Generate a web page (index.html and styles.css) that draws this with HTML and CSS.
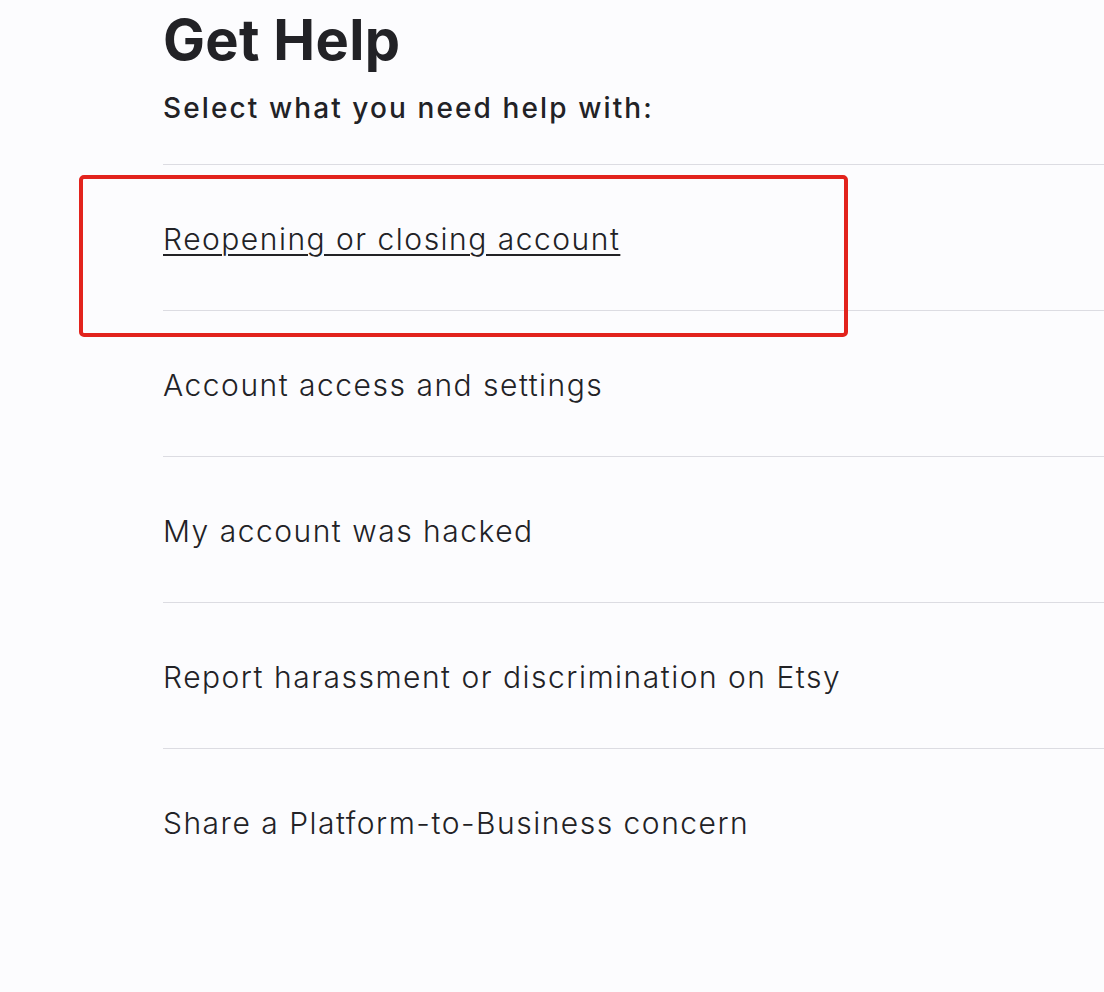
FILE: index.html
```html
<!DOCTYPE html>
<html lang="en">
<head>
    <meta charset="UTF-8">
    <title>Get Help</title>
    <link rel="stylesheet" href="styles.css">
</head>
<body>
    <div class="help">
        <h1>Get Help</h1>
        <p class="subtitle">Select what you need help with:</p>
        <ul class="topics">
            <li class="topic"><a href="#" class="active">Reopening or closing account</a></li>
            <li class="topic"><a href="#">Account access and settings</a></li>
            <li class="topic"><a href="#">My account was hacked</a></li>
            <li class="topic"><a href="#">Report harassment or discrimination on Etsy</a></li>
            <li class="topic"><a href="#">Share a Platform-to-Business concern</a></li>
        </ul>
        <div class="highlight"></div>
    </div>
</body>
</html>
```

FILE: styles.css
```css
body {
    font-family: Inter, 'Liberation Sans', sans-serif;
    background: #fcfcfe;
    color: #222226;
    margin: 0;
    padding: 0;
    height: 100vh;
}
.help {
    position: relative;
    padding: 7px 0 0 163px;
}
h1 {
    font-size: 56px;
    font-weight: 700;
    line-height: 66px;
    letter-spacing: 0.3px;
    margin: 0;
}
.subtitle {
    font-size: 28px;
    font-weight: 500;
    line-height: 34px;
    letter-spacing: 2.1px;
    margin: 18px 0 0;
}
.topics {
    list-style: none;
    margin: 39px 0 0;
    padding: 0;
}
.topic {
    border-top: 1px solid #dcdce2;
    padding: 56px 0 53px;
    font-size: 30px;
    font-weight: 300;
    line-height: 36px;
    letter-spacing: 1.5px;
}
.topic a {
    color: #222226;
    text-decoration: none;
}
.topic a.active {
    text-decoration: underline;
    text-decoration-thickness: 1.5px;
    text-underline-offset: 4px;
}
.highlight {
    position: absolute;
    left: 79px;
    top: 175px;
    width: 769px;
    height: 162px;
    box-sizing: border-box;
    border: 4px solid #e2231d;
    border-radius: 5px;
}
```
